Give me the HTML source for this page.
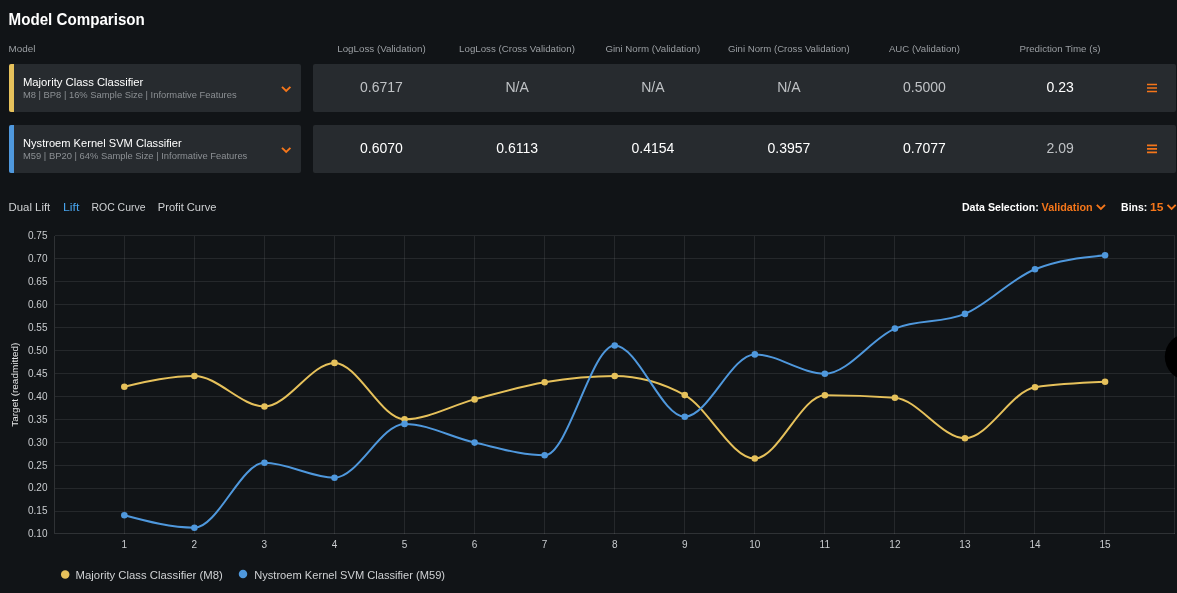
<!DOCTYPE html>
<html><head><meta charset="utf-8">
<style>
*{margin:0;padding:0}
html,body{width:1177px;height:593px;overflow:hidden;background:#111417}
svg{position:absolute;left:0;top:0;font-family:"Liberation Sans", sans-serif;will-change:transform}
</style></head><body>
<svg width="1177" height="593" viewBox="0 0 1177 593">
<rect x="9" y="64" width="292" height="48" rx="2" fill="#272b2f"/>
<path d="M11,64H14V112H11A2,2 0 0 1 9,110V66A2,2 0 0 1 11,64Z" fill="#e6c15b"/>
<rect x="9" y="125" width="292" height="48" rx="2" fill="#272b2f"/>
<path d="M11,125H14V173H11A2,2 0 0 1 9,171V127A2,2 0 0 1 11,125Z" fill="#4f98dd"/>
<rect x="313" y="64" width="863" height="48" rx="2" fill="#272b2f"/>
<rect x="313" y="125" width="863" height="48" rx="2" fill="#272b2f"/>
<path d="M282,86.8L286.20,91.00L290.40,86.8" fill="none" stroke="#f5761a" stroke-width="1.9"/>
<path d="M282,147.8L286.20,152.00L290.40,147.8" fill="none" stroke="#f5761a" stroke-width="1.9"/>
<path d="M1147,84.5H1157M1147,88.0H1157M1147,91.5H1157" stroke="#f5761a" stroke-width="1.7"/>
<path d="M1147,145.3H1157M1147,148.8H1157M1147,152.3H1157" stroke="#f5761a" stroke-width="1.7"/>
<path d="M1096.8,204.8L1100.90,208.90L1105.00,204.8" fill="none" stroke="#f5761a" stroke-width="1.9"/>
<path d="M1167.5,204.8L1171.60,208.90L1175.70,204.8" fill="none" stroke="#f5761a" stroke-width="1.9"/>
<text x="8.60" y="25.1" font-size="16.7" fill="#ffffff" font-weight="bold" textLength="136.20" lengthAdjust="spacingAndGlyphs">Model Comparison</text><text x="8.60" y="51.8" font-size="9.3" fill="#9b9fa3" font-weight="normal" textLength="26.90" lengthAdjust="spacingAndGlyphs">Model</text><text x="337.20" y="51.7" font-size="9.3" fill="#9b9fa3" font-weight="normal" textLength="88.50" lengthAdjust="spacingAndGlyphs">LogLoss (Validation)</text><text x="459.10" y="51.7" font-size="9.3" fill="#9b9fa3" font-weight="normal" textLength="115.80" lengthAdjust="spacingAndGlyphs">LogLoss (Cross Validation)</text><text x="605.40" y="51.7" font-size="9.3" fill="#9b9fa3" font-weight="normal" textLength="94.80" lengthAdjust="spacingAndGlyphs">Gini Norm (Validation)</text><text x="728.00" y="51.7" font-size="9.3" fill="#9b9fa3" font-weight="normal" textLength="121.60" lengthAdjust="spacingAndGlyphs">Gini Norm (Cross Validation)</text><text x="888.90" y="51.7" font-size="9.3" fill="#9b9fa3" font-weight="normal" textLength="71.00" lengthAdjust="spacingAndGlyphs">AUC (Validation)</text><text x="1019.40" y="51.7" font-size="9.3" fill="#9b9fa3" font-weight="normal" textLength="81.20" lengthAdjust="spacingAndGlyphs">Prediction Time (s)</text><text x="22.90" y="85.8" font-size="10.5" fill="#ffffff" font-weight="normal" textLength="120.50" lengthAdjust="spacingAndGlyphs">Majority Class Classifier</text><text x="22.90" y="97.9" font-size="9.3" fill="#8c9094" font-weight="normal" textLength="213.70" lengthAdjust="spacingAndGlyphs">M8 | BP8 | 16% Sample Size | Informative Features</text><text x="23.00" y="146.8" font-size="10.5" fill="#ffffff" font-weight="normal" textLength="158.60" lengthAdjust="spacingAndGlyphs">Nystroem Kernel SVM Classifier</text><text x="23.00" y="158.9" font-size="9.3" fill="#8c9094" font-weight="normal" textLength="224.30" lengthAdjust="spacingAndGlyphs">M59 | BP20 | 64% Sample Size | Informative Features</text><text x="8.50" y="210.7" font-size="10.5" fill="#cfd1d3" font-weight="normal" textLength="41.80" lengthAdjust="spacingAndGlyphs">Dual Lift</text><text x="63.00" y="210.7" font-size="10.5" fill="#47a3ec" font-weight="normal" textLength="16.50" lengthAdjust="spacingAndGlyphs">Lift</text><text x="91.50" y="210.7" font-size="10.5" fill="#cfd1d3" font-weight="normal" textLength="54.00" lengthAdjust="spacingAndGlyphs">ROC Curve</text><text x="157.80" y="210.7" font-size="10.5" fill="#cfd1d3" font-weight="normal" textLength="58.70" lengthAdjust="spacingAndGlyphs">Profit Curve</text><text x="961.90" y="211" font-size="11.2" fill="#ffffff" font-weight="bold" textLength="76.80" lengthAdjust="spacingAndGlyphs">Data Selection:</text><text x="1041.60" y="211" font-size="11.2" fill="#f5761a" font-weight="bold" textLength="51.00" lengthAdjust="spacingAndGlyphs">Validation</text><text x="1121.10" y="211" font-size="11.2" fill="#ffffff" font-weight="bold" textLength="26.10" lengthAdjust="spacingAndGlyphs">Bins:</text><text x="1150.00" y="211" font-size="11.2" fill="#f5761a" font-weight="bold" textLength="13.40" lengthAdjust="spacingAndGlyphs">15</text><text x="75.60" y="578.9" font-size="10.3" fill="#cfd1d3" font-weight="normal" textLength="147.20" lengthAdjust="spacingAndGlyphs">Majority Class Classifier (M8)</text><text x="254.20" y="578.9" font-size="10.3" fill="#cfd1d3" font-weight="normal" textLength="190.90" lengthAdjust="spacingAndGlyphs">Nystroem Kernel SVM Classifier (M59)</text>
<text x="381.5" y="92" font-size="14" fill="#bfc2c5" text-anchor="middle">0.6717</text><text x="517.1" y="92" font-size="14" fill="#bfc2c5" text-anchor="middle">N/A</text><text x="652.9" y="92" font-size="14" fill="#bfc2c5" text-anchor="middle">N/A</text><text x="788.9" y="92" font-size="14" fill="#bfc2c5" text-anchor="middle">N/A</text><text x="924.5" y="92" font-size="14" fill="#bfc2c5" text-anchor="middle">0.5000</text><text x="1060.1" y="92" font-size="14" fill="#ffffff" text-anchor="middle">0.23</text><text x="381.5" y="153" font-size="14" fill="#ffffff" text-anchor="middle">0.6070</text><text x="517.1" y="153" font-size="14" fill="#ffffff" text-anchor="middle">0.6113</text><text x="652.9" y="153" font-size="14" fill="#ffffff" text-anchor="middle">0.4154</text><text x="788.9" y="153" font-size="14" fill="#ffffff" text-anchor="middle">0.3957</text><text x="924.5" y="153" font-size="14" fill="#ffffff" text-anchor="middle">0.7077</text><text x="1060.1" y="153" font-size="14" fill="#bfc2c5" text-anchor="middle">2.09</text>
<g stroke="rgba(255,255,255,0.085)" stroke-width="1" shape-rendering="crispEdges"><line x1="54.5" x2="1175" y1="511.5" y2="511.5"/><line x1="54.5" x2="1175" y1="488.5" y2="488.5"/><line x1="54.5" x2="1175" y1="465.5" y2="465.5"/><line x1="54.5" x2="1175" y1="442.5" y2="442.5"/><line x1="54.5" x2="1175" y1="419.5" y2="419.5"/><line x1="54.5" x2="1175" y1="396.5" y2="396.5"/><line x1="54.5" x2="1175" y1="373.5" y2="373.5"/><line x1="54.5" x2="1175" y1="350.5" y2="350.5"/><line x1="54.5" x2="1175" y1="327.5" y2="327.5"/><line x1="54.5" x2="1175" y1="304.5" y2="304.5"/><line x1="54.5" x2="1175" y1="281.5" y2="281.5"/><line x1="54.5" x2="1175" y1="258.5" y2="258.5"/><line x1="54.5" x2="1175" y1="235.5" y2="235.5"/><line x1="124.5" x2="124.5" y1="235.5" y2="533.5"/><line x1="194.5" x2="194.5" y1="235.5" y2="533.5"/><line x1="264.5" x2="264.5" y1="235.5" y2="533.5"/><line x1="334.5" x2="334.5" y1="235.5" y2="533.5"/><line x1="404.5" x2="404.5" y1="235.5" y2="533.5"/><line x1="474.5" x2="474.5" y1="235.5" y2="533.5"/><line x1="544.5" x2="544.5" y1="235.5" y2="533.5"/><line x1="614.5" x2="614.5" y1="235.5" y2="533.5"/><line x1="684.5" x2="684.5" y1="235.5" y2="533.5"/><line x1="754.5" x2="754.5" y1="235.5" y2="533.5"/><line x1="824.5" x2="824.5" y1="235.5" y2="533.5"/><line x1="894.5" x2="894.5" y1="235.5" y2="533.5"/><line x1="964.5" x2="964.5" y1="235.5" y2="533.5"/><line x1="1034.5" x2="1034.5" y1="235.5" y2="533.5"/><line x1="1104.5" x2="1104.5" y1="235.5" y2="533.5"/><line x1="1174.5" x2="1174.5" y1="235.5" y2="533.5"/></g>
<g stroke="rgba(255,255,255,0.13)" stroke-width="1" shape-rendering="crispEdges"><line x1="54.5" x2="54.5" y1="235.5" y2="533.5"/><line x1="54.5" x2="1175" y1="533.5" y2="533.5"/></g>
<g fill="#c9cccf" font-size="10" text-anchor="end"><text x="47.5" y="239.1">0.75</text><text x="47.5" y="262.0">0.70</text><text x="47.5" y="285.0">0.65</text><text x="47.5" y="307.9">0.60</text><text x="47.5" y="330.9">0.55</text><text x="47.5" y="353.8">0.50</text><text x="47.5" y="376.7">0.45</text><text x="47.5" y="399.7">0.40</text><text x="47.5" y="422.6">0.35</text><text x="47.5" y="445.5">0.30</text><text x="47.5" y="468.5">0.25</text><text x="47.5" y="491.4">0.20</text><text x="47.5" y="514.4">0.15</text><text x="47.5" y="537.3">0.10</text></g>
<g fill="#c9cccf" font-size="10" text-anchor="middle"><text x="124.3" y="548.2">1</text><text x="194.4" y="548.2">2</text><text x="264.4" y="548.2">3</text><text x="334.5" y="548.2">4</text><text x="404.6" y="548.2">5</text><text x="474.6" y="548.2">6</text><text x="544.6" y="548.2">7</text><text x="614.7" y="548.2">8</text><text x="684.7" y="548.2">9</text><text x="754.8" y="548.2">10</text><text x="824.8" y="548.2">11</text><text x="894.9" y="548.2">12</text><text x="964.9" y="548.2">13</text><text x="1035.0" y="548.2">14</text><text x="1105.0" y="548.2">15</text></g>
<text transform="translate(17.8,384.7) rotate(-90)" text-anchor="middle" font-size="9.8" fill="#e6e7e8" textLength="84" lengthAdjust="spacingAndGlyphs">Target (readmitted)</text>
<path d="M124.35,386.70C147.70,381.35,171.05,376.00,194.40,376.00C217.75,376.00,241.10,406.50,264.45,406.50C287.80,406.50,311.15,362.90,334.50,362.90C357.85,362.90,381.20,419.30,404.55,419.30C427.90,419.30,451.25,405.57,474.60,399.40C497.95,393.23,521.30,386.20,544.65,382.30C568.00,378.40,591.35,376.00,614.70,376.00C638.05,376.00,661.40,382.37,684.75,395.10C708.10,407.83,731.45,458.50,754.80,458.50C778.15,458.50,801.50,395.20,824.85,395.20C848.20,395.20,871.55,396.03,894.90,397.70C918.25,399.37,941.60,438.20,964.95,438.20C988.30,438.20,1011.65,390.87,1035.00,387.20C1058.35,383.53,1081.70,382.62,1105.05,381.70" fill="none" stroke="#e6c15b" stroke-width="2"/>
<path d="M124.35,515.30C147.70,521.50,171.05,527.70,194.40,527.70C217.75,527.70,241.10,462.80,264.45,462.80C287.80,462.80,311.15,477.70,334.50,477.70C357.85,477.70,381.20,423.90,404.55,423.90C427.90,423.90,451.25,437.37,474.60,442.60C497.95,447.83,521.30,455.30,544.65,455.30C568.00,455.30,591.35,345.50,614.70,345.50C638.05,345.50,661.40,416.70,684.75,416.70C708.10,416.70,731.45,354.40,754.80,354.40C778.15,354.40,801.50,373.70,824.85,373.70C848.20,373.70,871.55,338.40,894.90,328.60C918.25,318.80,941.60,323.70,964.95,313.90C988.30,304.10,1011.65,278.47,1035.00,269.20C1058.35,259.93,1081.70,257.62,1105.05,255.30" fill="none" stroke="#4f98dd" stroke-width="2"/>
<circle cx="124.35" cy="386.70" r="3.3" fill="#e6c15b"/><circle cx="194.40" cy="376.00" r="3.3" fill="#e6c15b"/><circle cx="264.45" cy="406.50" r="3.3" fill="#e6c15b"/><circle cx="334.50" cy="362.90" r="3.3" fill="#e6c15b"/><circle cx="404.55" cy="419.30" r="3.3" fill="#e6c15b"/><circle cx="474.60" cy="399.40" r="3.3" fill="#e6c15b"/><circle cx="544.65" cy="382.30" r="3.3" fill="#e6c15b"/><circle cx="614.70" cy="376.00" r="3.3" fill="#e6c15b"/><circle cx="684.75" cy="395.10" r="3.3" fill="#e6c15b"/><circle cx="754.80" cy="458.50" r="3.3" fill="#e6c15b"/><circle cx="824.85" cy="395.20" r="3.3" fill="#e6c15b"/><circle cx="894.90" cy="397.70" r="3.3" fill="#e6c15b"/><circle cx="964.95" cy="438.20" r="3.3" fill="#e6c15b"/><circle cx="1035.00" cy="387.20" r="3.3" fill="#e6c15b"/><circle cx="1105.05" cy="381.70" r="3.3" fill="#e6c15b"/><circle cx="124.35" cy="515.30" r="3.3" fill="#4f98dd"/><circle cx="194.40" cy="527.70" r="3.3" fill="#4f98dd"/><circle cx="264.45" cy="462.80" r="3.3" fill="#4f98dd"/><circle cx="334.50" cy="477.70" r="3.3" fill="#4f98dd"/><circle cx="404.55" cy="423.90" r="3.3" fill="#4f98dd"/><circle cx="474.60" cy="442.60" r="3.3" fill="#4f98dd"/><circle cx="544.65" cy="455.30" r="3.3" fill="#4f98dd"/><circle cx="614.70" cy="345.50" r="3.3" fill="#4f98dd"/><circle cx="684.75" cy="416.70" r="3.3" fill="#4f98dd"/><circle cx="754.80" cy="354.40" r="3.3" fill="#4f98dd"/><circle cx="824.85" cy="373.70" r="3.3" fill="#4f98dd"/><circle cx="894.90" cy="328.60" r="3.3" fill="#4f98dd"/><circle cx="964.95" cy="313.90" r="3.3" fill="#4f98dd"/><circle cx="1035.00" cy="269.20" r="3.3" fill="#4f98dd"/><circle cx="1105.05" cy="255.30" r="3.3" fill="#4f98dd"/>
<circle cx="1188.3" cy="356.8" r="23.5" fill="#000"/>
<circle cx="65.2" cy="574.4" r="4.25" fill="#e6c15b"/>
<circle cx="243" cy="574" r="4.25" fill="#4f98dd"/>
</svg>
</body></html>
